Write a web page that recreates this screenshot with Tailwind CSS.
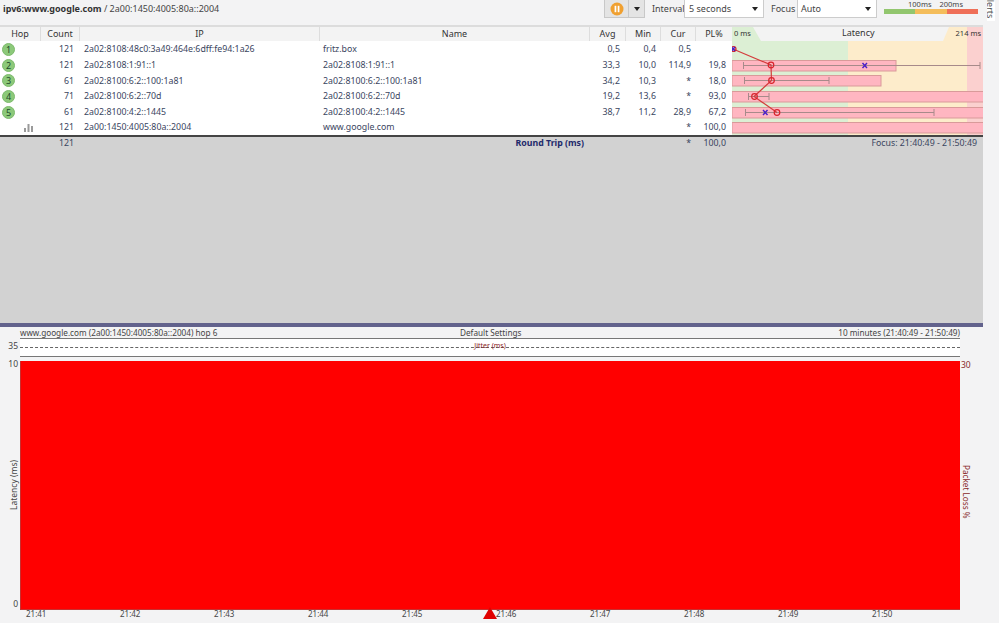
<!DOCTYPE html>
<html lang="en">

<head>
    <meta charset="UTF-8">
    <title>PingPlotter</title>
    <script src="https://cdn.jsdelivr.net/npm/@tailwindcss/browser@4"></script>
</head>

<body class="w-[999px] h-[623px] overflow-hidden bg-[#f3f3f4] text-[9px] leading-none text-[#333] font-['Noto_Sans',sans-serif]">
    <!-- toolbar -->
    <div class="h-[25px] flex items-start text-[#444]">
        <div class="w-[604px] pl-[3px] pt-[4px] text-[9px]"><b class="text-[#333]">ipv6:www.google.com</b> / 2a00:1450:4005:80a::2004</div>
        <div class="w-[41px] h-[18px] flex bg-[#e4e4e4] border-x border-b border-[#c8c8c8]">
            <div class="w-6 flex items-center justify-center border-r border-[#c8c8c8]">
                <svg width="14" height="14" viewBox="0 0 14 14"><circle cx="7" cy="7" r="6.5" fill="#f0a030"/><rect x="4.6" y="3.8" width="1.7" height="6.4" fill="#fff"/><rect x="7.7" y="3.8" width="1.7" height="6.4" fill="#fff"/></svg>
            </div>
            <div class="flex-1 flex items-center justify-center"><div class="border-x-[3px] border-t-[4px] border-x-transparent border-t-[#222]"></div></div>
        </div>
        <div class="ml-[7px] w-[32px] pt-[4px]">Interval</div>
        <div class="w-[80px] h-[18px] bg-white border-x border-b border-[#ccc] flex items-center justify-between pl-[4px] pr-[5px]">5 seconds<div class="border-x-[3px] border-t-[4px] border-x-transparent border-t-[#222]"></div></div>
        <div class="ml-[7px] w-[26px] pt-[4px]">Focus</div>
        <div class="w-[80px] h-[18px] bg-white border-x border-b border-[#ccc] flex items-center justify-between pl-[3px] pr-[5px]">Auto<div class="border-x-[3px] border-t-[4px] border-x-transparent border-t-[#222]"></div></div>
        <div class="ml-[7px] w-[94px] text-[7.5px]">
            <div class="flex justify-center gap-[8px] pl-[9px] pt-[1px] h-[9px]"><span>100ms</span><span>200ms</span></div>
            <div class="flex h-[5px]">
                <div class="flex-1 bg-[#92c66e]"></div>
                <div class="flex-1 bg-[#f4bd5b]"></div>
                <div class="flex-1 bg-[#ef6f58]"></div>
            </div>
        </div>
        <div class="ml-auto mr-[4px] relative w-[8px] h-[21px] bg-white overflow-hidden">
            <div class="absolute left-[8px] top-[-6px] rotate-90 origin-top-left text-[9px] text-[#555]">Alerts</div>
        </div>
    </div>

    <div class="flex">
        <div class="w-[983px]">
            <!-- hop table + latency graph -->
            <div class="flex h-[110px] bg-white">
                <div class="w-[732px]">
                    <div class="h-[16px] flex text-center bg-[#f3f3f3] border-t-2 border-[#dcdcdc] items-stretch">
                        <div class="w-[41px] border-r border-[#ddd] pt-[2px]">Hop</div>
                        <div class="w-[39px] border-r border-[#ddd] pt-[2px]">Count</div>
                        <div class="w-[240px] border-r border-[#ddd] pt-[2px]">IP</div>
                        <div class="w-[270px] border-r border-[#ddd] pt-[2px]">Name</div>
                        <div class="w-[36px] border-r border-[#ddd] pt-[2px]">Avg</div>
                        <div class="w-[35px] border-r border-[#ddd] pt-[2px]">Min</div>
                        <div class="w-[35px] border-r border-[#ddd] pt-[2px]">Cur</div>
                        <div class="w-[36px] pt-[2px]">PL%</div>
                    </div>
                    <div id="rows" class="text-[#3a4560] text-[8.8px] pt-[1px]">
                        <div class="h-[15.6px] flex items-center">
                            <div class="w-[41px] pl-[2px]"><div class="w-[13px] h-[13px] rounded-full bg-[#8cc97a] border border-[#7dba6c] text-[9px] text-[#1d4a2a] flex items-center justify-center">1</div></div>
                            <div class="w-[33px] text-right">121</div><div class="w-[246px] pl-[10px]">2a02:8108:48c0:3a49:464e:6dff:fe94:1a26</div><div class="w-[270px] pl-[3px]">fritz.box</div>
                            <div class="w-[30px] text-right">0,5</div><div class="w-[36px] text-right">0,4</div><div class="w-[35px] text-right">0,5</div><div class="w-[41px] text-right"></div>
                        </div>
                        <div class="h-[15.6px] flex items-center">
                            <div class="w-[41px] pl-[2px]"><div class="w-[13px] h-[13px] rounded-full bg-[#8cc97a] border border-[#7dba6c] text-[9px] text-[#1d4a2a] flex items-center justify-center">2</div></div>
                            <div class="w-[33px] text-right">121</div><div class="w-[246px] pl-[10px]">2a02:8108:1:91::1</div><div class="w-[270px] pl-[3px]">2a02:8108:1:91::1</div>
                            <div class="w-[30px] text-right">33,3</div><div class="w-[36px] text-right">10,0</div><div class="w-[35px] text-right">114,9</div><div class="w-[35px] text-right">19,8</div>
                        </div>
                        <div class="h-[15.6px] flex items-center">
                            <div class="w-[41px] pl-[2px]"><div class="w-[13px] h-[13px] rounded-full bg-[#8cc97a] border border-[#7dba6c] text-[9px] text-[#1d4a2a] flex items-center justify-center">3</div></div>
                            <div class="w-[33px] text-right">61</div><div class="w-[246px] pl-[10px]">2a02:8100:6:2::100:1a81</div><div class="w-[270px] pl-[3px]">2a02:8100:6:2::100:1a81</div>
                            <div class="w-[30px] text-right">34,2</div><div class="w-[36px] text-right">10,3</div><div class="w-[35px] text-right">*</div><div class="w-[35px] text-right">18,0</div>
                        </div>
                        <div class="h-[15.6px] flex items-center">
                            <div class="w-[41px] pl-[2px]"><div class="w-[13px] h-[13px] rounded-full bg-[#8cc97a] border border-[#7dba6c] text-[9px] text-[#1d4a2a] flex items-center justify-center">4</div></div>
                            <div class="w-[33px] text-right">71</div><div class="w-[246px] pl-[10px]">2a02:8100:6:2::70d</div><div class="w-[270px] pl-[3px]">2a02:8100:6:2::70d</div>
                            <div class="w-[30px] text-right">19,2</div><div class="w-[36px] text-right">13,6</div><div class="w-[35px] text-right">*</div><div class="w-[35px] text-right">93,0</div>
                        </div>
                        <div class="h-[15.6px] flex items-center">
                            <div class="w-[41px] pl-[2px]"><div class="w-[13px] h-[13px] rounded-full bg-[#8cc97a] border border-[#7dba6c] text-[9px] text-[#1d4a2a] flex items-center justify-center">5</div></div>
                            <div class="w-[33px] text-right">61</div><div class="w-[246px] pl-[10px]">2a02:8100:4:2::1445</div><div class="w-[270px] pl-[3px]">2a02:8100:4:2::1445</div>
                            <div class="w-[30px] text-right">38,7</div><div class="w-[36px] text-right">11,2</div><div class="w-[35px] text-right">28,9</div><div class="w-[35px] text-right">67,2</div>
                        </div>
                        <div class="h-[15.6px] flex items-center">
                            <div class="w-[41px] pl-[24px]">
                                <svg width="10" height="8" viewBox="0 0 10 8" fill="#9a9a9a"><rect x="0" y="4" width="2" height="4"/><rect x="3.5" y="0" width="2" height="8"/><rect x="7" y="2" width="2" height="6"/></svg>
                            </div>
                            <div class="w-[33px] text-right">121</div><div class="w-[246px] pl-[10px]">2a00:1450:4005:80a::2004</div><div class="w-[270px] pl-[3px]">www.google.com</div>
                            <div class="w-[30px] text-right"></div><div class="w-[36px] text-right"></div><div class="w-[35px] text-right">*</div><div class="w-[35px] text-right">100,0</div>
                        </div>
                    </div>
                </div>
                <!-- latency graph -->
                <div class="relative w-[251px] h-[110px] overflow-hidden">
                    <svg width="251" height="110" viewBox="732 25 251 110" class="absolute inset-0">
                        <rect x="732" y="25" width="116" height="110" fill="#dcefd4"/>
                        <rect x="848" y="25" width="119" height="110" fill="#fdeccb"/>
                        <rect x="967" y="25" width="16" height="110" fill="#fbd0cf"/>
                        <polygon points="732,25 983,25 983,27 732,27" fill="#dcdcdc"/>
                        <polygon points="753,27 949,27 943,41 761,41" fill="#f3f3f3"/>
                        <g fill="#ffb6c1" stroke="#d99a9a" stroke-width="1">
                            <rect x="732" y="60.5" width="164" height="10.5"/>
                            <rect x="732" y="75.5" width="149" height="10.5"/>
                            <rect x="732" y="91.5" width="252" height="10.5"/>
                            <rect x="732" y="107.5" width="252" height="10.5"/>
                            <rect x="732" y="122.5" width="252" height="10.5"/>
                        </g>
                        <g stroke="#a78a8a" stroke-width="1">
                            <path d="M743.5 65.5H980M743.5 62v7M980 62v7"/>
                            <path d="M744.5 80.5H829M744.5 77v7M829 77v7"/>
                            <path d="M748.5 96.5H769M748.5 93v7M769 93v7"/>
                            <path d="M745.5 112.5H934M745.5 109v7M934 109v7"/>
                        </g>
                        <polyline points="733,49 771,65 771.5,80.5 754,96.5 777,112.5" fill="none" stroke="#d43c3c" stroke-width="1.2"/>
                        <g fill="none" stroke="#d8242c" stroke-width="1.2">
                            <circle cx="733.5" cy="49" r="2.5"/>
                            <circle cx="771" cy="65" r="2.8"/>
                            <circle cx="771.5" cy="80.5" r="2.8"/>
                            <circle cx="754.5" cy="96.5" r="2.8"/>
                            <circle cx="777" cy="112.5" r="2.8"/>
                        </g>
                        <g stroke="#4a22c8" stroke-width="1.4">
                            <path d="M731.5 47l3.5 4M735 47l-3.5 4"/>
                            <path d="M862.5 63l4.5 5M867 63l-4.5 5"/>
                            <path d="M763 110l4.5 5M767.5 110l-4.5 5"/>
                        </g>
                    </svg>
                    <div class="absolute left-[2px] top-[5px] text-[7.5px]">0 ms</div>
                    <div class="absolute left-[110px] top-[3px] text-[9px]">Latency</div>
                    <div class="absolute right-[2px] top-[5px] text-[7.5px]">214 ms</div>
                </div>
            </div>

            <!-- total row + empty gray area -->
            <div class="h-[188px] bg-[#d2d2d2] border-t-2 border-[#444] relative">
                <div class="flex h-[12px] items-center text-[#3a4560] text-[8.8px]">
                    <div class="w-[74px] text-right">121</div>
                    <div class="w-[516px] text-right font-bold text-[#1f2a6b] pr-[6px]">Round Trip (ms)</div>
                    <div class="w-[66px]"></div>
                    <div class="w-[35px] text-right">*</div>
                    <div class="w-[35px] text-right">100,0</div>
                    <div class="w-[257px] text-right pr-[6px]">Focus: 21:40:49 - 21:50:49</div>
                </div>
            </div>
            <div class="h-[4px] bg-[#62628c]"></div>
        </div>
        <div class="flex-1"></div>
    </div>

    <!-- hop chart -->
    <div class="w-[960px] h-[11px] flex justify-between pl-[20px] text-[8.2px] text-[#444] pt-[2px] relative">
        <span>www.google.com (2a00:1450:4005:80a::2004) hop 6</span>
        <span class="absolute left-[460px]">Default Settings</span>
        <span>10 minutes (21:40:49 - 21:50:49)</span>
    </div>
    <div class="flex h-[19px]">
        <div class="w-[20px] text-[8.5px] text-right pr-[2px] pt-[4px] text-[#444]">35</div>
        <div class="w-[940px] bg-white border-y border-[#777] relative">
            <div class="absolute left-0 right-0 top-[8px] border-t border-dashed border-[#666]"></div>
            <div class="absolute left-0 right-0 top-[3px] text-center text-[7px] text-[#8b1c1c]">Jitter (ms)</div>
        </div>
    </div>
    <div class="flex h-[253px] pt-[4px]">
        <div class="w-[20px] relative text-[8.5px] text-[#444]">
            <div class="absolute right-[2px] top-[-1px]">10</div>
            <div class="absolute left-[10px] top-[149px] -rotate-90 origin-top-left text-[8.5px] whitespace-nowrap">Latency (ms)</div>
            <div class="absolute right-[2px] top-[239px]">0</div>
        </div>
        <div class="w-[940px] h-[249px] bg-[#ff0000] border-l border-b border-[#c83030]"></div>
        <div class="relative w-[39px] text-[8.5px] text-[#8a2a2a]">
            <div class="absolute left-[1px] top-[0px]">30</div>
            <div class="absolute left-[10px] top-[104px] rotate-90 origin-top-left text-[8.2px] whitespace-nowrap">Packet Loss %</div>
        </div>
    </div>
    <div class="relative h-[10px] text-[8px] text-[#444]">
        <div class="ml-[26px] flex">
            <span class="w-[94px]">21:41</span><span class="w-[94px]">21:42</span><span class="w-[94px]">21:43</span><span class="w-[94px]">21:44</span><span class="w-[94px]">21:45</span><span class="w-[94px]">21:46</span><span class="w-[94px]">21:47</span><span class="w-[94px]">21:48</span><span class="w-[94px]">21:49</span><span class="w-[94px]">21:50</span>
        </div>
        <div class="absolute left-[483px] top-[-3px] w-0 h-0 border-x-[7px] border-b-[12px] border-x-transparent border-b-[#e00000]"></div>
    </div>
</body>

</html>
